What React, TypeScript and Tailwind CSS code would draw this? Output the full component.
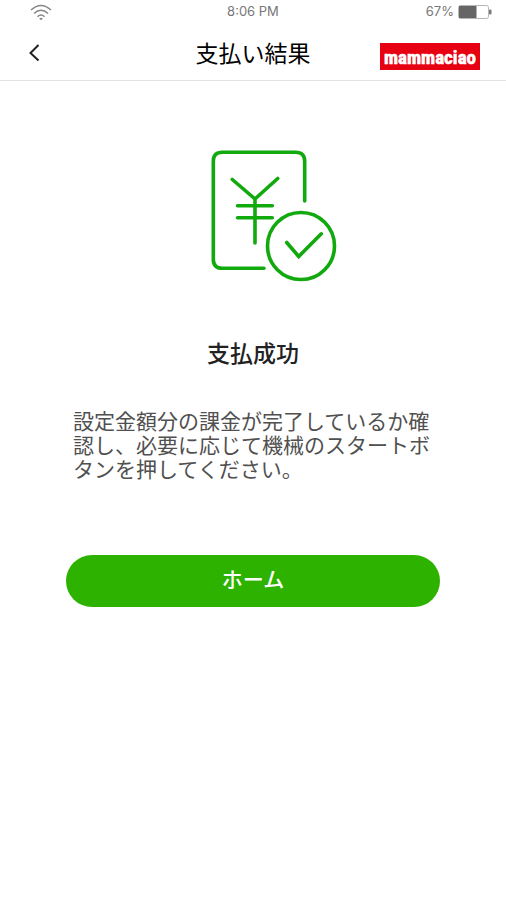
import React from 'react';

const WifiIcon: React.FC = () => (
  <svg viewBox="0 0 22 17" className="w-[22px] h-[17px] ml-4" fill="none" stroke="#858585" strokeWidth="1.5" aria-hidden="true">
    <path d="M1 6Q11 -3 21 6" />
    <path d="M4 9.5Q11 3 18 9.5" />
    <path d="M7.5 12.7Q11 9.3 14.5 12.7" />
    <path d="M9.2 14.4L11 16.2L12.8 14.4Q11 13.2 9.2 14.4Z" fill="#858585" stroke="none" />
  </svg>
);

const BatteryIcon: React.FC = () => (
  <svg viewBox="0 0 34 14" className="w-[34px] h-[14px]" aria-hidden="true">
    <rect x="0.5" y="0.5" width="30" height="13" rx="2" fill="#fff" stroke="#b5b5b5" />
    <rect x="1" y="1" width="17.5" height="12" fill="#666" />
    <rect x="31" y="4.5" width="2.5" height="5" rx="1" fill="#777" />
  </svg>
);

const PaymentDoneIcon: React.FC = () => (
  <svg
    viewBox="0 0 168 132"
    className="w-[168px] h-[132px]"
    fill="none"
    stroke="#12a90f"
    strokeWidth="3.6"
    strokeLinecap="round"
    strokeLinejoin="round"
    aria-hidden="true"
  >
    {/* Receipt */}
    <path d="M135.7 51V11.3Q135.7 2.3 126.7 2.3H53.3Q44.3 2.3 44.3 11.3V109.3Q44.3 118.3 53.3 118.3H95" />
    {/* Yen sign */}
    <path d="M63.3 29.5L86 49L108.7 28.5M86 49V93M68.5 55.7H103.3M68.5 67.7H103.3" />
    {/* Check */}
    <circle cx="132" cy="96" r="33.5" />
    <path d="M117.7 92.5L129.7 106.5L152.3 83.8" strokeLinejoin="miter" />
  </svg>
);

const App: React.FC = () => {
  return (
    <div className="min-h-screen bg-white font-['Noto_Sans_CJK_JP',sans-serif]">
      {/* Status bar */}
      <div className="grid grid-cols-[1fr_auto_1fr] items-center h-6 px-[14px] font-['Inter',sans-serif] text-[13px] text-[#777]">
        <WifiIcon />
        <span>8:06 PM</span>
        <div className="flex items-center justify-end gap-1">
          <span>67%</span>
          <BatteryIcon />
        </div>
      </div>

      <header className="grid grid-cols-[1fr_auto_1fr] items-center h-[57px] px-[26px] border-b border-[#e2e2e2]">
        <button type="button" aria-label="戻る" className="w-4 h-5">
          <svg viewBox="0 0 16 20" className="w-4 h-5" fill="none" stroke="#222" strokeWidth="2" aria-hidden="true">
            <path d="M12.5 3L4.5 11L12.5 18.5" />
          </svg>
        </button>
        <h1 className="text-[23px] leading-8 font-normal text-black">支払い結果</h1>
        <svg viewBox="0 0 100 27" className="w-[100px] h-[27px] mt-2 justify-self-end" role="img" aria-label="mammaciao">
          <rect width="100" height="27" fill="#e60012" />
          <text
            x="50"
            y="21"
            textAnchor="middle"
            fill="#fff"
            stroke="#fff"
            strokeWidth="0.6"
            className="font-['Roboto_Condensed','Liberation_Sans',sans-serif] text-[19px] font-bold"
          >
            mammaciao
          </text>
        </svg>
      </header>

      <main className="flex flex-col items-center px-[66px] pt-[69px]">
        <PaymentDoneIcon />
        <h2 className="mt-[54px] text-[23px] leading-8 font-medium text-[#222]">支払成功</h2>
        <p className="w-full mt-10 px-[7px] text-[21px] leading-6 font-normal text-[#505050]">
          設定金額分の課金が完了しているか確認し、必要に応じて機械のスタートボタンを押してください。
        </p>
        <button type="button" className="w-full h-[52px] mt-[75px] pb-1 rounded-full bg-[#2db200] text-[21px] font-medium text-white">
          ホーム
        </button>
      </main>
    </div>
  );
};

export default App;
